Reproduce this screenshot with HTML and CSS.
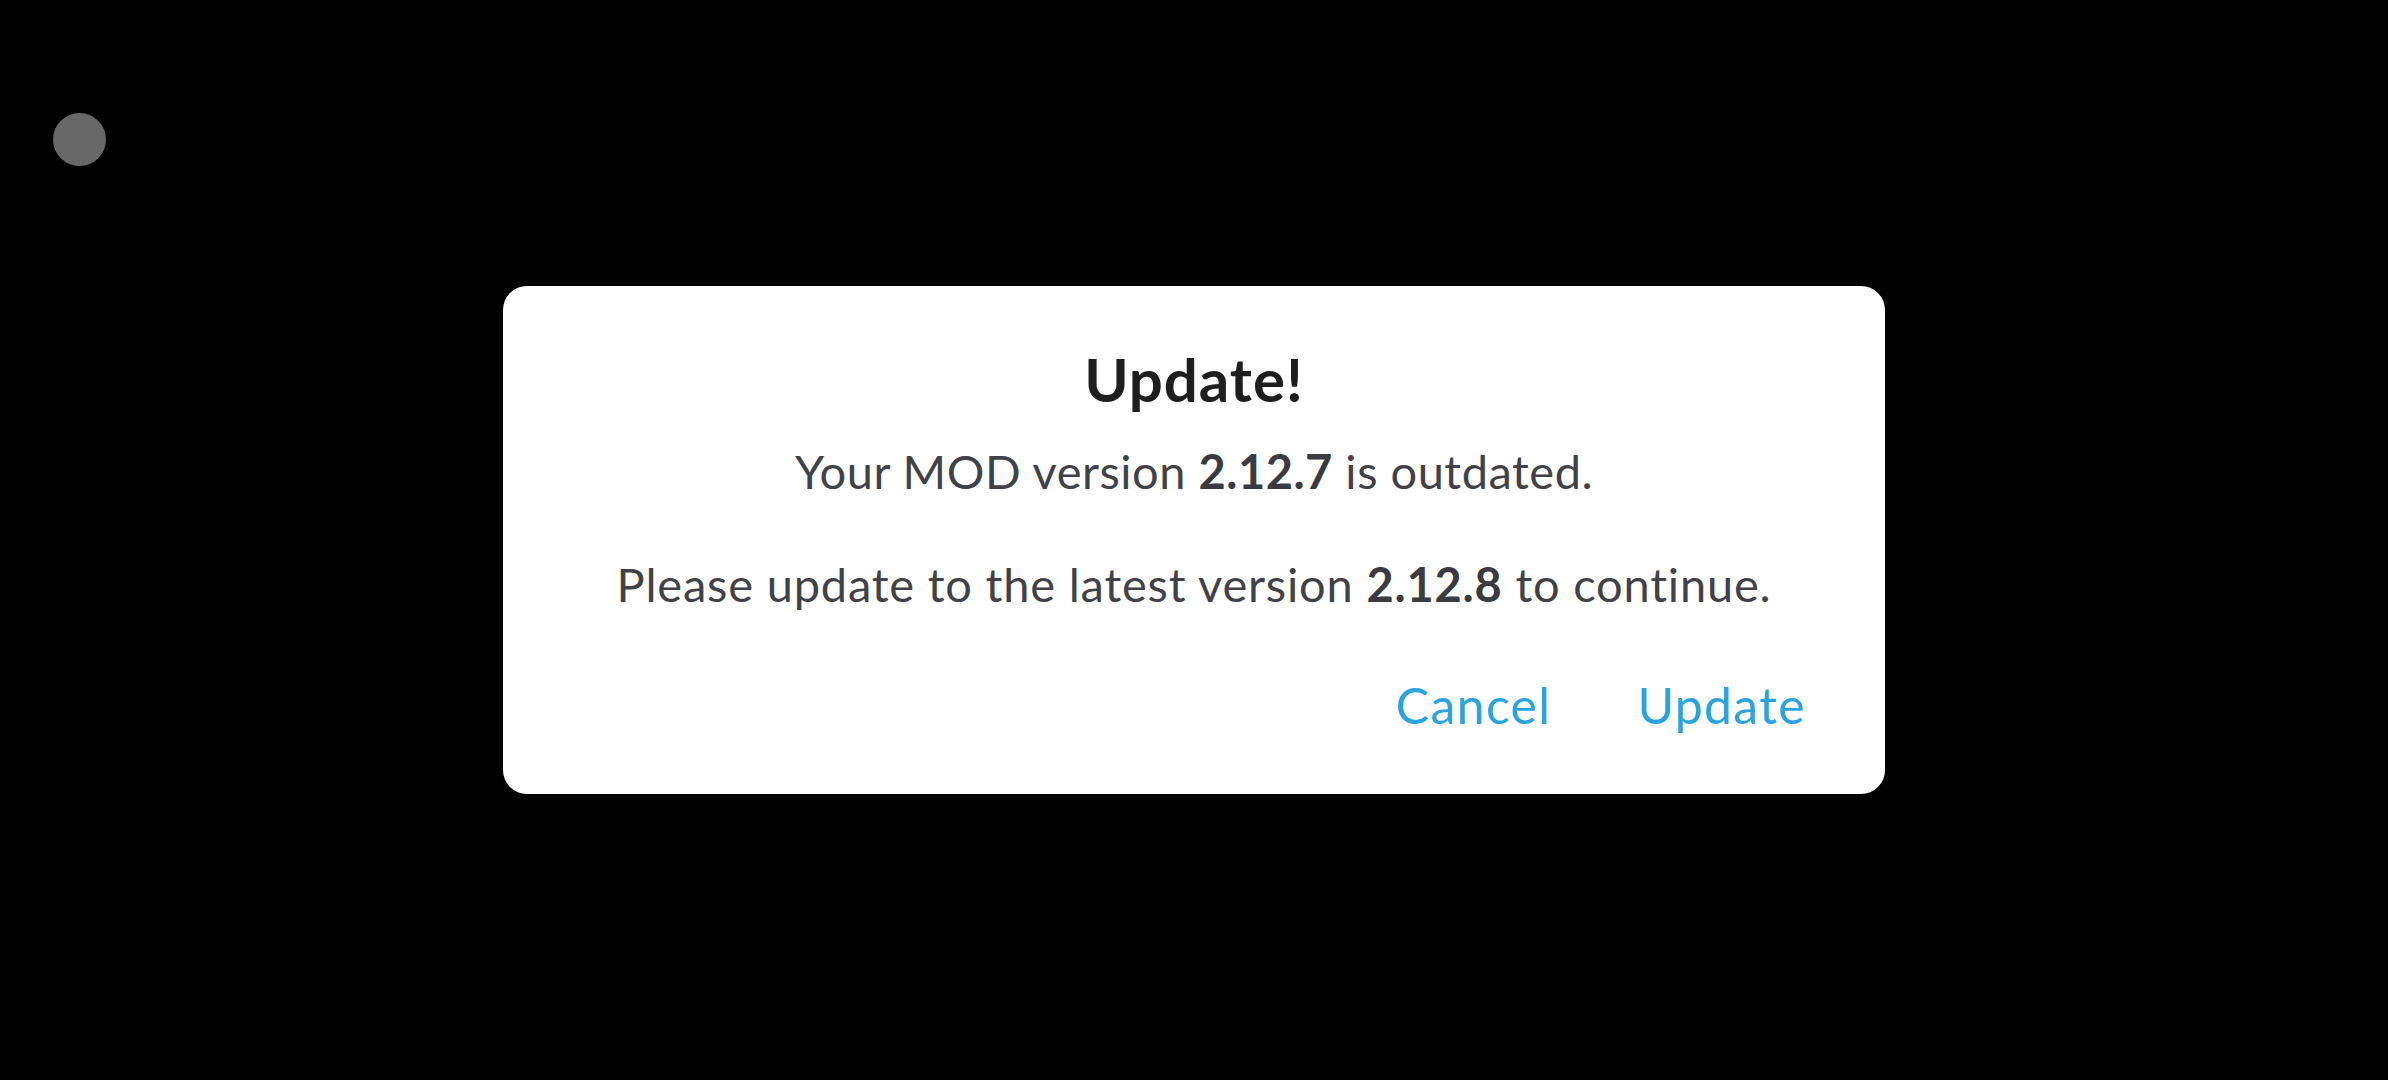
FILE: index.html
```html
<!DOCTYPE html>
<html lang="en">
<head>
  <meta charset="UTF-8">
  <meta name="viewport" content="width=device-width, initial-scale=1.0">
  <title>Update</title>
  <link rel="stylesheet" href="styles.css">
</head>
<body>
  <div class="float-dot"></div>

  <div class="dialog">
    <h2 class="title">Update!</h2>
    <p class="msg">Your MOD version <b>2.12.7</b> is outdated.</p>
    <p class="msg msg-second">Please update to the latest version <b>2.12.8</b> to continue.</p>
    <div class="actions">
      <button class="btn">Cancel</button>
      <button class="btn">Update</button>
    </div>
  </div>
</body>
</html>
```

FILE: styles.css
```css
html, body {
  margin: 0;
  height: 100%;
}
body {
  font-family: "Lato", "Open Sans", sans-serif;
  background-color: #000;
  display: flex;
  align-items: center;
  justify-content: center;
}
.float-dot {
  position: absolute;
  left: 53px;
  top: 113px;
  width: 53px;
  height: 53px;
  border-radius: 50%;
  background-color: #676767;
}
.dialog {
  background-color: #fff;
  border-radius: 24px;
  width: 1382px;
  height: 508px;
  box-sizing: border-box;
  padding: 57px 79px 0 79px;
  display: flex;
  flex-direction: column;
  align-items: center;
}
.title {
  margin: 0;
  font-size: 60px;
  line-height: 1.2;
  font-weight: bold;
  letter-spacing: 1px;
  color: #1e1e1e;
}
.msg {
  margin: 28px 0 0 0;
  font-size: 47px;
  line-height: 1.2;
  letter-spacing: 0.5px;
  color: #414247;
}
.msg b {
  color: #3a3b40;
}
.msg-second {
  margin-top: 57px;
  letter-spacing: 0.8px;
}
.actions {
  align-self: flex-end;
  display: flex;
  gap: 86px;
  margin-top: 62px;
}
.btn {
  font-family: inherit;
  font-size: 50px;
  line-height: 1.2;
  letter-spacing: 1.3px;
  color: #2aa3e1;
  background: none;
  border: none;
  padding: 0;
  cursor: pointer;
}
```
